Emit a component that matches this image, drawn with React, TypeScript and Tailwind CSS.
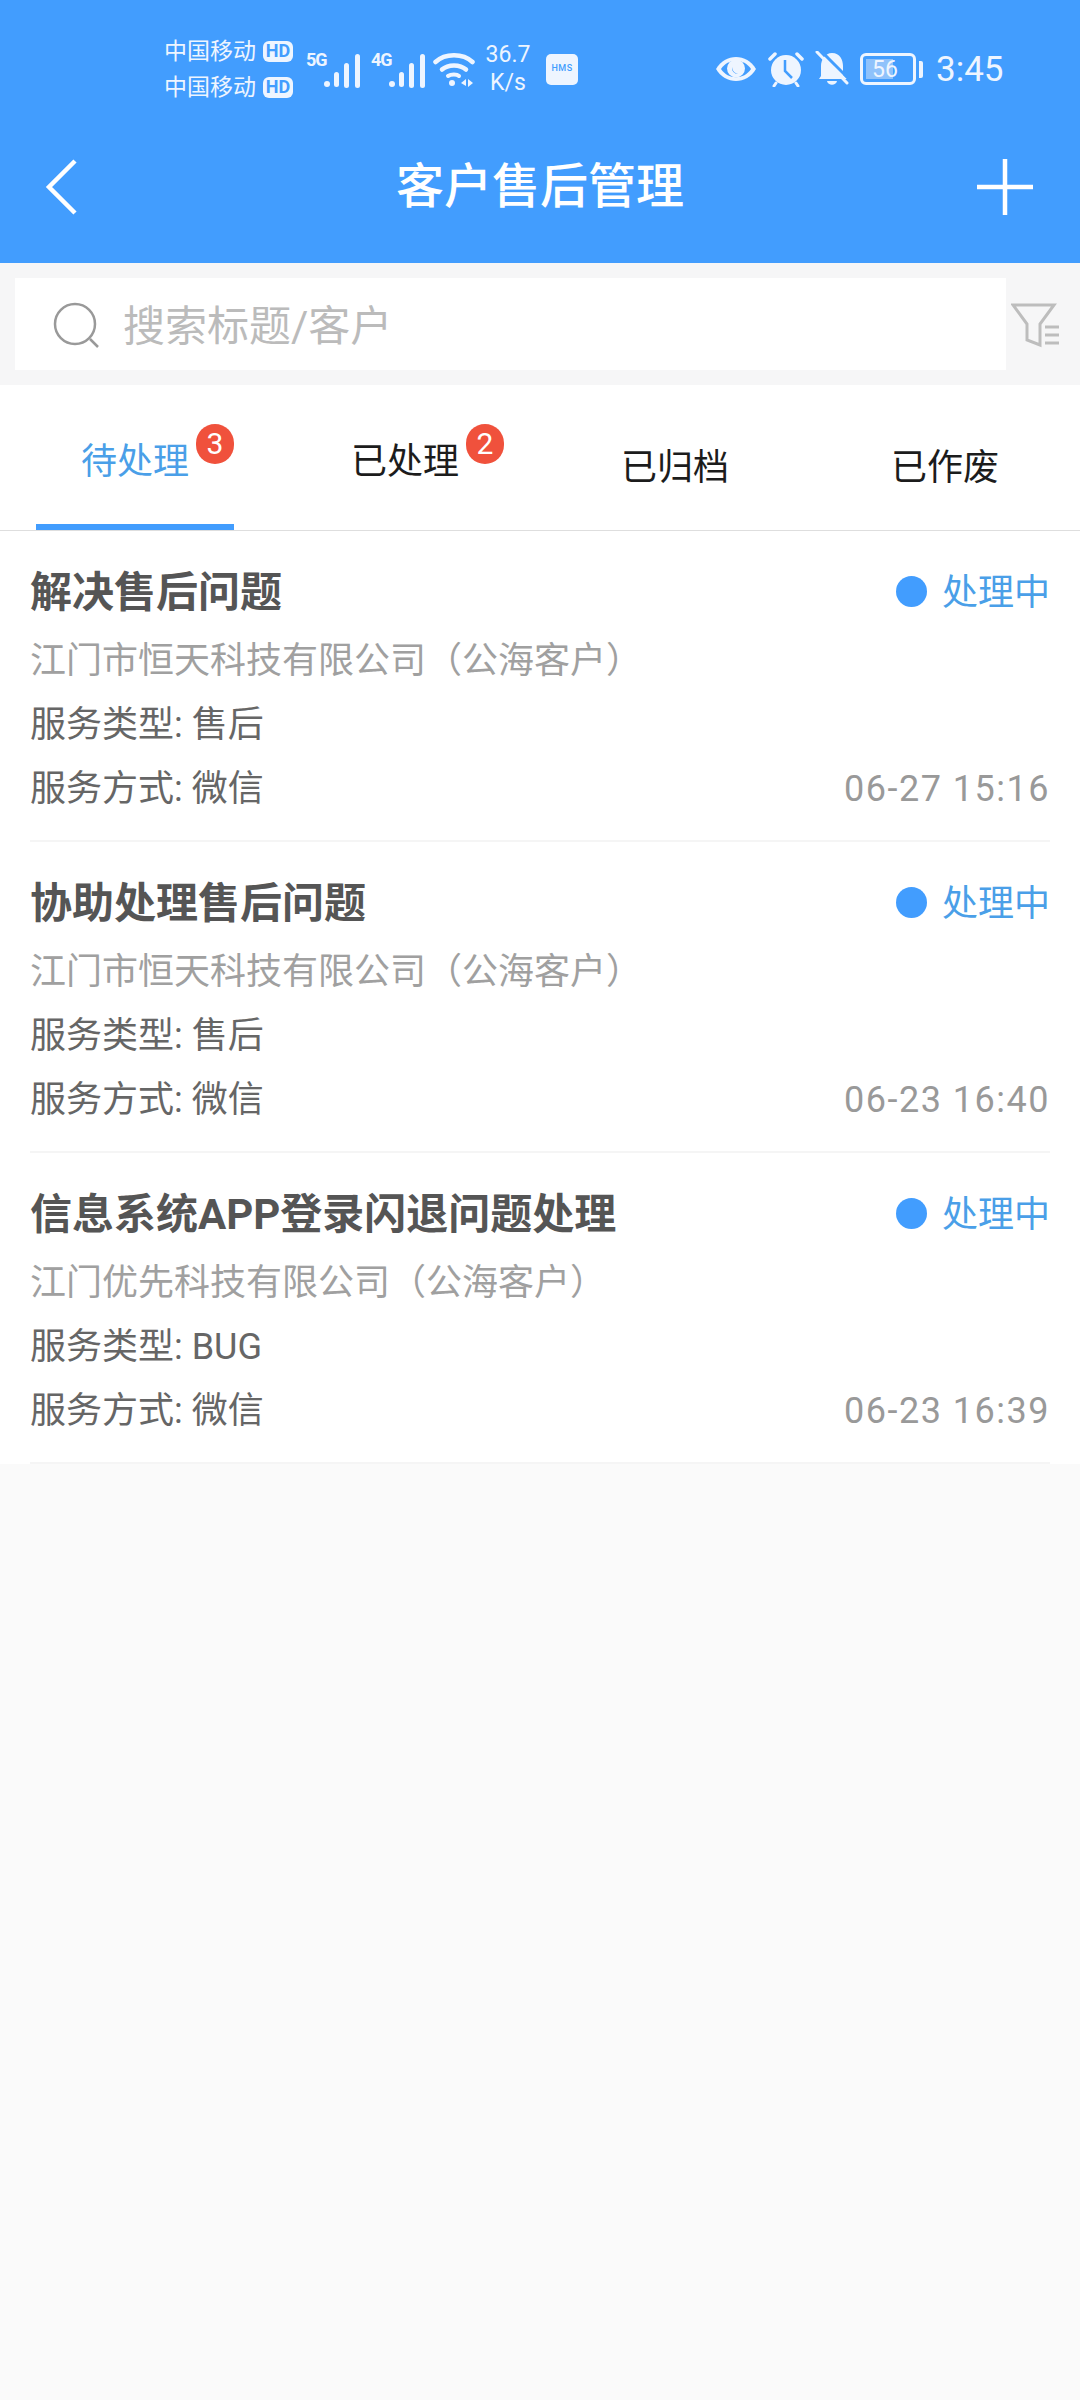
const FONT = '"Roboto","Noto Sans CJK SC","Noto Sans",sans-serif';

function Signal({ className }: { className?: string }) {
  return (
    <svg width="38" height="36" viewBox="0 0 38 36" className={className} fill="#eef5ff">
      <circle cx="3" cy="31" r="3" />
      <rect x="10" y="19" width="5" height="15" rx="2.5" />
      <rect x="20" y="10" width="5" height="25" rx="2.5" />
      <rect x="31" y="1" width="5" height="34" rx="2.5" />
    </svg>
  );
}

function Hd() {
  return (
    <span className="ml-[7px] inline-flex h-[21px] w-[30px] items-center justify-center rounded-[6px] bg-[#eef5ff] text-[18px] font-bold leading-none text-[#429dfe]">
      HD
    </span>
  );
}

function StatusBar() {
  return (
    <div className="flex h-[138px] items-center text-[#eef5ff]">
      <div className="ml-[164px] flex w-[132px] flex-col gap-[9px]">
        <div className="flex h-[27px] items-center text-[23px] leading-none">中国移动<Hd /></div>
        <div className="flex h-[27px] items-center text-[23px] leading-none">中国移动<Hd /></div>
      </div>
      <div className="ml-[10px] flex h-[50px] w-[56px] items-start pt-[7px] text-[18px] font-bold leading-none tracking-[-1px]">5G</div>
      <Signal className="-ml-[38px] mt-[4px]" />
      <div className="ml-[9px] flex h-[50px] w-[56px] items-start pt-[7px] text-[18px] font-bold leading-none tracking-[-1px]">4G</div>
      <Signal className="-ml-[38px] mt-[4px]" />
      <svg width="42" height="36" viewBox="0 0 42 36" className="ml-[6px]" fill="none" stroke="#eef5ff" strokeLinecap="round">
        <path d="M2.5 11 C12 2 30 2 39.5 11" strokeWidth="4.5" />
        <path d="M9 18.5 C15 13 27 13 33 18.5" strokeWidth="4.5" />
        <path d="M15 25 C18 23 24 23 26 25" strokeWidth="4" />
        <circle cx="19" cy="32" r="3" fill="#eef5ff" stroke="none" />
        <path d="M28 32 L33 28 V35 Z M35 28 V36 L40 32 Z" fill="#eef5ff" stroke="none" />
      </svg>
      <div className="ml-[3px] flex w-[60px] flex-col items-center text-[23px] leading-[28px]">
        <span>36.7</span>
        <span>K/s</span>
      </div>
      <div className="ml-[8px] flex h-[31px] w-[32px] items-center justify-center rounded-[5px] bg-[#eef5ff] text-[9px] font-medium tracking-[0.5px] text-[#429dfe]">
        HMS
      </div>
      <svg width="42" height="28" viewBox="0 0 42 28" className="ml-[137px]">
        <path d="M1 14 C10 -2 32 -2 41 14 C32 30 10 30 1 14 Z" fill="#eef5ff" />
        <path d="M6 14 C13 3 29 3 36 14 C29 25 13 25 6 14 Z" fill="#429dfe" />
        <circle cx="21" cy="13.5" r="9" fill="#eef5ff" />
        <path d="M17 12 A6 6 0 0 0 23 19 A8 8 0 0 1 17 12 Z" fill="#429dfe" />
      </svg>
      <svg width="36" height="36" viewBox="0 0 36 36" className="ml-[11px]">
        <circle cx="18" cy="19" r="15" fill="#eef5ff" />
        <path d="M17 9 V20 L24 27" stroke="#429dfe" strokeWidth="2.5" fill="none" />
        <path d="M2 8 L7 3 M34 8 L29 3" stroke="#eef5ff" strokeWidth="3.5" strokeLinecap="round" />
        <path d="M8 32 L6 35 M28 32 L30 35" stroke="#eef5ff" strokeWidth="3" strokeLinecap="round" />
      </svg>
      <svg width="34" height="36" viewBox="0 0 34 36" className="ml-[11px]">
        <path d="M17 2 C25 2 28 9 28 15 V24 L32 28 H4 L6 25 V15 C6 9 10 2 17 2 Z" fill="#eef5ff" />
        <path d="M12 30 H22 C21 35 13 35 12 30 Z" fill="#eef5ff" />
        <path d="M5 -1 L36 30" stroke="#429dfe" strokeWidth="3" />
        <path d="M2 1 L32 32" stroke="#eef5ff" strokeWidth="3" strokeLinecap="round" />
      </svg>
      <div className="relative ml-[11px] flex h-[32px] w-[56px] items-center justify-center rounded-[6px] border-[3px] border-[#eef5ff] text-[23px] leading-none">
        <span className="absolute inset-y-[3px] left-[3px] w-[27px] bg-[#8fc2fb]" />
        <span className="relative -translate-x-[3px]">56</span>
      </div>
      <div className="ml-[3px] h-[17px] w-[4px] rounded-r-[2px] bg-[#eef5ff]" />
      <div className="ml-[13px] text-[35px] leading-none">3:45</div>
    </div>
  );
}

function NavBar() {
  return (
    <div className="flex h-[125px] items-start justify-between px-[46px]">
      <div className="w-[56px]">
        <svg width="34" height="56" viewBox="0 0 34 56" className="mt-[21px] -ml-[2px]" fill="none" stroke="#fff" strokeWidth="4.5">
          <path d="M31 2 L5 28 L31 54" />
        </svg>
      </div>
      <div className="mt-[19px] text-[48px] font-medium leading-[60px] text-white">客户售后管理</div>
      <svg width="56" height="56" viewBox="0 0 56 56" className="mt-[21px] -translate-x-[1px]" stroke="#fff" strokeWidth="4.5">
        <path d="M28 0 V56 M0 28 H56" />
      </svg>
    </div>
  );
}

function SearchBar() {
  return (
    <div className="flex h-[122px] items-center bg-[#f6f6f7] pl-[15px]">
      <div className="flex h-[92px] w-[991px] items-center bg-white pl-[38px]">
        <svg width="48" height="48" viewBox="0 0 48 48" className="mt-[3px]" fill="none" stroke="#999" strokeWidth="2.5">
          <circle cx="22" cy="22" r="20" />
          <path d="M37 37 L45 45" />
        </svg>
        <span className="ml-[22px] mt-[6px] text-[42px] leading-none text-[#bbbbbb]">搜索标题/客户</span>
      </div>
      <svg width="50" height="46" viewBox="0 0 50 46" className="ml-[5px] mt-[1px]" fill="none" stroke="#bdbdbd" strokeWidth="3">
        <path d="M2 3 H43 L29 22 V43 L16 38 V22 Z" />
        <path d="M34 25 H48 M34 33 H48 M34 41 H48" />
      </svg>
    </div>
  );
}

function Tab({ label, badge, active, lift }: { label: string; badge?: string; active?: boolean; lift?: boolean }) {
  return (
    <div className="relative flex h-[145px] flex-1 items-start justify-center">
      <span className={`relative text-[36px] leading-[50px] ${lift ? "mt-[52px]" : "mt-[58px]"} ${active ? "text-[#4a9fe8]" : "text-[#1c1c1c]"}`}>
        {label}
        {badge && (
          <span className="absolute -right-[45px] -top-[13px] flex h-[40px] w-[38px] items-center justify-center rounded-full bg-[#f0513c] text-[30px] font-normal leading-none text-white">
            {badge}
          </span>
        )}
      </span>
      {active && <span className="absolute bottom-0 left-[36px] h-[6px] w-[198px] bg-[#429dfe]" />}
    </div>
  );
}

function Tabs() {
  return (
    <div className="flex border-b border-[#dedede] bg-white">
      <Tab label="待处理" badge="3" active lift />
      <Tab label="已处理" badge="2" lift />
      <Tab label="已归档" />
      <Tab label="已作废" />
    </div>
  );
}

function Item({ title, company, type, date }: { title: string; company: string; type: string; date: string }) {
  return (
    <div className="mx-[30px] flex h-[311px] flex-col border-b-2 border-[#f5f5f5] pt-[30px]">
      <div className="flex h-[64px] items-center justify-between">
        <span className="text-[42px] font-bold leading-none text-[#555555]">{title}</span>
        <span className="flex items-center text-[36px] leading-none text-[#4a9fe8]">
          <span className="mr-[15px] h-[31px] w-[31px] -translate-y-[2px] rounded-full bg-[#429dfe]" />
          处理中
        </span>
      </div>
      <div className="mt-[4px] flex h-[64px] items-center text-[36px] leading-none text-[#a0a0a0]">{company}</div>
      <div className="flex h-[64px] items-center text-[36px] leading-none text-[#666666]">服务类型: {type}</div>
      <div className="flex h-[64px] items-center justify-between text-[36px] leading-none">
        <span className="text-[#666666]">服务方式: 微信</span>
        <span className="tracking-[1.5px] text-[#999999]">{date}</span>
      </div>
    </div>
  );
}

export default function App() {
  return (
    <div className="flex min-h-[2400px] w-[1080px] flex-col bg-[#fafafa]" style={{ fontFamily: FONT }}>
      <div className="bg-[#429dfe]">
        <StatusBar />
        <NavBar />
      </div>
      <SearchBar />
      <Tabs />
      <div className="bg-white">
        <Item title="解决售后问题" company="江门市恒天科技有限公司（公海客户）" type="售后" date="06-27 15:16" />
        <Item title="协助处理售后问题" company="江门市恒天科技有限公司（公海客户）" type="售后" date="06-23 16:40" />
        <Item title="信息系统APP登录闪退问题处理" company="江门优先科技有限公司（公海客户）" type="BUG" date="06-23 16:39" />
      </div>
    </div>
  );
}
